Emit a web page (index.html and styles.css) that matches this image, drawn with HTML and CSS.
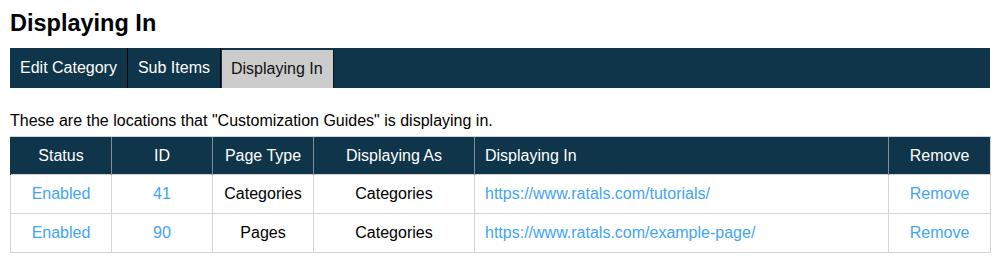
FILE: index.html
```html
<!DOCTYPE html>
<html>
<head>
<meta charset="utf-8">
<link rel="stylesheet" href="styles.css">
</head>
<body>
<div class="page">
  <h1 class="title">Displaying In</h1>
  <nav class="tabs">
    <a class="tab">Edit Category</a>
    <a class="tab">Sub Items</a>
    <a class="tab active">Displaying In</a>
  </nav>
  <p class="intro">These are the locations that "Customization Guides" is displaying in.</p>
  <table class="grid">
    <colgroup>
      <col class="c-status"><col class="c-id"><col class="c-type"><col class="c-as"><col class="c-in"><col class="c-remove">
    </colgroup>
    <thead>
      <tr>
        <th>Status</th><th>ID</th><th>Page Type</th><th>Displaying As</th><th class="left">Displaying In</th><th>Remove</th>
      </tr>
    </thead>
    <tbody>
      <tr>
        <td><a class="link">Enabled</a></td>
        <td><a class="link">41</a></td>
        <td>Categories</td>
        <td>Categories</td>
        <td class="left"><a class="link">https://www.ratals.com/tutorials/</a></td>
        <td><a class="link">Remove</a></td>
      </tr>
      <tr>
        <td><a class="link">Enabled</a></td>
        <td><a class="link">90</a></td>
        <td>Pages</td>
        <td>Categories</td>
        <td class="left"><a class="link">https://www.ratals.com/example-page/</a></td>
        <td><a class="link">Remove</a></td>
      </tr>
    </tbody>
  </table>
</div>
</body>
</html>
```
FILE: styles.css
```css
html, body {
  margin: 0;
  padding: 0;
  background: #fff;
}
body {
  font-family: "Liberation Sans", Arial, sans-serif;
  font-size: 16px;
  color: #000;
}
.page {
  padding: 0 10px;
}
.title {
  font-size: 23.5px;
  font-weight: bold;
  margin: 0;
  padding-top: 10px;
  line-height: 27px;
  height: 38px;
}
.tabs {
  display: flex;
  background: #0e3549;
  height: 40px;
}
.tab {
  display: flex;
  align-items: center;
  padding: 0 10px;
  color: #fff;
  border-right: 1px solid #000;
  line-height: 18px;
}
.tab.active {
  background: #cccccc;
  color: #111;
  margin-top: 2px;
  border-left: 1px solid #0e3549;
  border-right: 1px solid #111;
  padding-left: 9px;
}
.intro {
  margin: 0;
  padding-top: 24px;
  line-height: 18px;
  height: 24px;
}
.grid {
  width: 980px;
  table-layout: fixed;
  border-collapse: collapse;
  border: 1px solid #d4d4d4;
}
.c-status, .c-id, .c-type { width: 101px; }
.c-as { width: 161px; }
.c-in { width: 414px; }
.c-remove { width: 102px; }
.grid th {
  background: #0e3549;
  color: #fff;
  font-weight: normal;
  height: 37px;
  padding: 0 10px;
  text-align: center;
  border-left: 1px solid #7d8e98;
  border-top: 1px solid #d4d4d4;
}
.grid th:first-child {
  border-left: 1px solid #0e3549;
}
.grid td {
  height: 38px;
  padding: 0 10px;
  text-align: center;
  border: 1px solid #d4d4d4;
}
.grid .left {
  text-align: left;
}
.link {
  color: #42a5f5;
  text-decoration: none;
}
```
